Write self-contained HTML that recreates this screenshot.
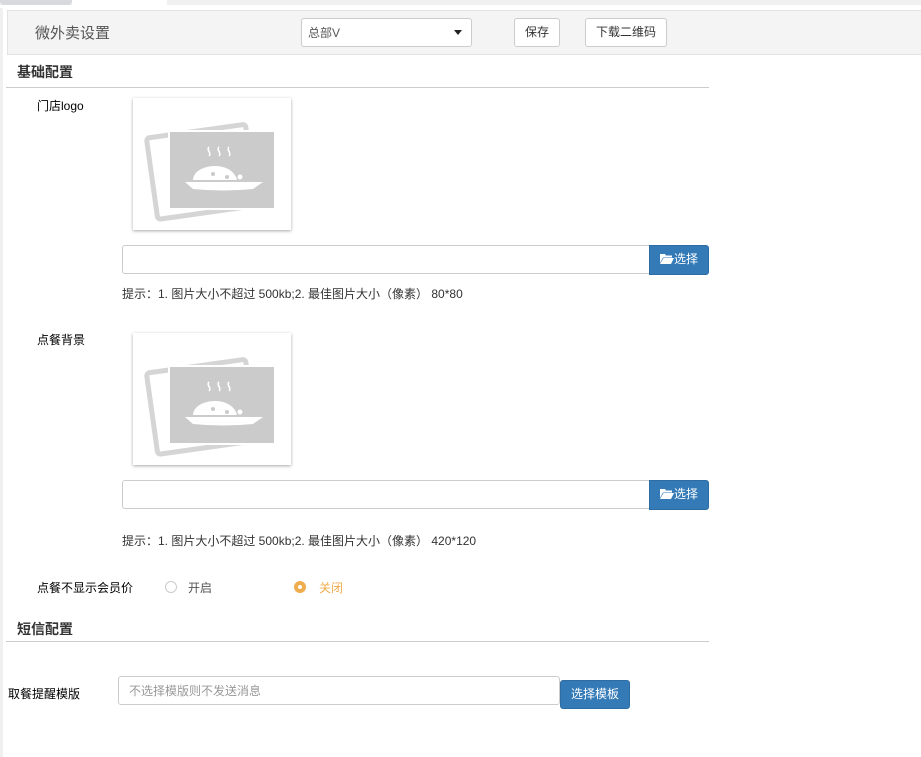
<!DOCTYPE html>
<html><head><meta charset="utf-8"><style>
*{box-sizing:border-box;margin:0;padding:0}
body{width:921px;height:757px;background:#fff;font-family:"Liberation Sans","Noto Sans CJK SC",sans-serif;font-size:12px;color:#333;position:relative;overflow:hidden}
.a{position:absolute}
.lbl{color:#000;font-size:12px}
.inp{border:1px solid #ccc;border-radius:3px;background:#fff}
.btn{border:1px solid #ccc;border-radius:3px;background:#fff;font-size:12px;text-align:center}
.pb{background:#337ab7;color:#fff;border:1px solid #2e6da4;border-radius:3px;text-align:center;font-size:12px}
.hr{height:1px;background:#ccc}
.card{width:158px;height:132px;background:#fff;box-shadow:0 1px 3px rgba(0,0,0,.35)}
</style></head><body>
<div class="a" style="left:0;top:0;width:921px;height:5px;background:#f0f0f0"></div>
<div class="a" style="left:0;top:0;width:72px;height:5px;background:#d8d9de;border-radius:0 0 4px 4px"></div>
<div class="a" style="left:72px;top:0;width:95px;height:5px;background:#fff"></div>
<div class="a" style="left:0;top:8px;width:3px;height:749px;background:#f0f0f0"></div>
<div class="a" style="left:7px;top:10px;width:914px;height:45px;background:#f4f4f4;border:1px solid #e3e3e3;border-right:none"></div>
<div class="a" style="left:35px;top:22px;font-size:15px;color:#555">微外卖设置</div>
<div class="a inp" style="left:301px;top:18px;width:171px;height:29px;"><span class="a" style="left:6px;top:5px;color:#555">总部V</span><span class="a" style="right:9px;top:11px;width:0;height:0;border-left:4px solid transparent;border-right:4px solid transparent;border-top:5px solid #222"></span></div>
<div class="a btn" style="left:514px;top:18px;width:46px;height:29px;line-height:26px">保存</div>
<div class="a btn" style="left:585px;top:18px;width:82px;height:29px;line-height:26px">下载二维码</div>
<div class="a" style="left:17px;top:62px;font-size:14px;font-weight:bold;color:#333">基础配置</div>
<div class="a hr" style="left:6px;top:87px;width:703px"></div>

<div class="a lbl" style="left:37px;top:97px">门店logo</div>
<div class="a card" style="left:133px;top:98px">
<svg width="158" height="132" viewBox="0 0 158 132"><g transform="rotate(-8 60 70)"><rect x="18" y="34" width="100" height="82" fill="none" stroke="#d5d5d5" stroke-width="5" rx="3"/></g><rect x="36" y="33" width="106" height="78" fill="#cbcbcb" stroke="#fff" stroke-width="2"/><path d="M76 49c-3 3 3 6 0 9 M86 49c-3 3 3 6 0 9 M96 49c-3 3 3 6 0 9" stroke="#fff" stroke-width="1.6" fill="none"/><path d="M60 82c0-8 10-14 22-14s20 6 22 14z" fill="#fff"/><path d="M52 84h78l-10 7q-30 3-60 0z" fill="#fff"/><circle cx="107" cy="79" r="2.5" fill="#fff"/><circle cx="80" cy="76" r="2" fill="#cbcbcb"/><circle cx="94" cy="79" r="2" fill="#cbcbcb"/></svg></div>
<div class="a inp" style="left:122px;top:245px;width:528px;height:29px;border-radius:3px 0 0 3px"></div>
<div class="a pb" style="left:649px;top:245px;width:60px;height:30px;line-height:27px;border-radius:0 3px 3px 0"><svg width="14" height="11" viewBox="0 0 14 11" style="vertical-align:-1px"><path d="M0 1h5l1 1.5h6v2H3L0 10z M3.5 5H14l-3 6H0z" fill="#fff"/></svg>选择</div>
<div class="a" style="left:122px;top:285px">提示：1. 图片大小不超过 500kb;2. 最佳图片大小（像素） 80*80</div>

<div class="a lbl" style="left:37px;top:331px">点餐背景</div>
<div class="a card" style="left:133px;top:333px">
<svg width="158" height="132" viewBox="0 0 158 132"><g transform="rotate(-8 60 70)"><rect x="18" y="34" width="100" height="82" fill="none" stroke="#d5d5d5" stroke-width="5" rx="3"/></g><rect x="36" y="33" width="106" height="78" fill="#cbcbcb" stroke="#fff" stroke-width="2"/><path d="M76 49c-3 3 3 6 0 9 M86 49c-3 3 3 6 0 9 M96 49c-3 3 3 6 0 9" stroke="#fff" stroke-width="1.6" fill="none"/><path d="M60 82c0-8 10-14 22-14s20 6 22 14z" fill="#fff"/><path d="M52 84h78l-10 7q-30 3-60 0z" fill="#fff"/><circle cx="107" cy="79" r="2.5" fill="#fff"/><circle cx="80" cy="76" r="2" fill="#cbcbcb"/><circle cx="94" cy="79" r="2" fill="#cbcbcb"/></svg></div>
<div class="a inp" style="left:122px;top:480px;width:528px;height:29px;border-radius:3px 0 0 3px"></div>
<div class="a pb" style="left:649px;top:480px;width:60px;height:30px;line-height:27px;border-radius:0 3px 3px 0"><svg width="14" height="11" viewBox="0 0 14 11" style="vertical-align:-1px"><path d="M0 1h5l1 1.5h6v2H3L0 10z M3.5 5H14l-3 6H0z" fill="#fff"/></svg>选择</div>
<div class="a" style="left:122px;top:532px">提示：1. 图片大小不超过 500kb;2. 最佳图片大小（像素） 420*120</div>

<div class="a lbl" style="left:37px;top:579px">点餐不显示会员价</div>
<div class="a" style="left:165px;top:581px;width:12px;height:12px;border:1px solid #ccc;border-radius:50%"></div>
<div class="a" style="left:188px;top:579px;color:#555">开启</div>
<div class="a" style="left:294px;top:581px;width:12px;height:12px;border-radius:50%;background:#f0ad4e"><div class="a" style="left:4px;top:4px;width:4px;height:4px;background:#fff;border-radius:50%"></div></div>
<div class="a" style="left:319px;top:579px;color:#f0ad4e">关闭</div>

<div class="a" style="left:17px;top:619px;font-size:14px;font-weight:bold;color:#333">短信配置</div>
<div class="a hr" style="left:6px;top:641px;width:703px"></div>
<div class="a lbl" style="left:8px;top:685px">取餐提醒模版</div>
<div class="a inp" style="left:118px;top:676px;width:442px;height:29px"><span class="a" style="left:10px;top:5px;color:#999">不选择模版则不发送消息</span></div>
<div class="a pb" style="left:560px;top:680px;width:70px;height:29px;line-height:26px">选择模板</div>
</body></html>
